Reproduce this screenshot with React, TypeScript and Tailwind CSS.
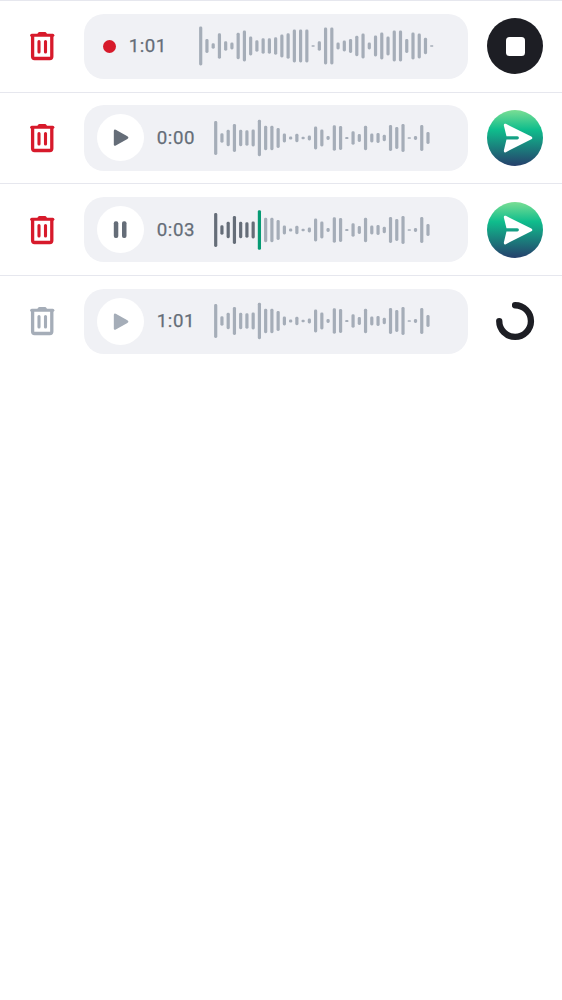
import type { ReactNode } from "react";

const RECORDING = [
  39, 14, 5.5, 25.5, 9.5, 7, 26.5, 31, 19, 11.5, 15.5, 15.5, 17.5, 23, 25.5, 33, 33, 33, 1.4, 9.5,
  37, 37, 7, 11, 14, 20.5, 25, 7, 21, 27, 19, 31, 31, 14, 27, 25, 16.5, 1.4,
];
const CLIP = [
  34, 9.5, 16.5, 28, 16.5, 15.5, 17, 36.5, 24.5, 24.5, 20, 9, 2.9, 8.5, 2.7, 5, 23, 17, 4, 25.5,
  24, 2.2, 13.5, 8, 24.5, 9, 10, 6.5, 26, 22, 28, 1.6, 4, 26, 12,
];
const PITCH = 6.244;

function Waveform({ levels, cursor = -1 }: { levels: number[]; cursor?: number }) {
  return (
    <svg width="240" height="40" viewBox="0 0 240 40" className="shrink-0">
      {levels.map((level, i) => {
        const h = i === cursor ? 39.7 : level;
        const fill = i === cursor ? "#079b74" : i < cursor ? "#656d78" : "#a5adb8";
        return (
          <rect key={i} x={i * PITCH + 0.1} y={20 - h / 2} width="3.2" height={h} rx={Math.min(1.4, h / 2.4)} fill={fill} />
        );
      })}
    </svg>
  );
}

function TrashIcon() {
  return (
    <svg width="26" height="30" viewBox="0 0 26 30" fill="none" stroke="currentColor" className="shrink-0">
      <path d="M2.6 4.6v20.9a2 2 0 0 0 2 2h15.2a2 2 0 0 0 2-2V4.6" strokeWidth="3.3" />
      <path d="M1.7 4.2h21.1" strokeWidth="3.1" strokeLinecap="round" />
      <path d="M6.8 4 8.1 1.7q.4-.6 1.2-.6h5.8q.8 0 1.2.6L17.6 4Z" fill="currentColor" stroke="none" />
      <path d="M9 10.6V21M15.5 10.6V21" strokeWidth="3.1" strokeLinecap="round" />
    </svg>
  );
}

function PlayIcon() {
  return (
    <svg width="47" height="47" viewBox="0 0 47 47" fill="currentColor">
      <path d="M16.8 17v13.3q0 2.2 2 1.2l11.6-6.6q2-1.3 0-2.6L18.8 15.8q-2-1-2 1.2Z" />
    </svg>
  );
}

function PauseIcon() {
  return (
    <svg width="47" height="47" viewBox="0 0 47 47" fill="currentColor">
      <rect x="16.8" y="15.3" width="4.5" height="16.6" rx="1.9" />
      <rect x="25" y="15.3" width="4.5" height="16.6" rx="1.9" />
    </svg>
  );
}

function StopButton() {
  return (
    <button className="flex size-[56.2px] items-center justify-center rounded-full bg-[#1d1e24]">
      <span className="size-[19px] rounded-[3.5px] bg-white" />
    </button>
  );
}

function SendButton() {
  return (
    <button className="size-[56.2px] rounded-full bg-[linear-gradient(180deg,#7ade94_0%,#0fbd8c_35%,#26406c_100%)]">
      <svg width="56.2" height="56.2" viewBox="0 0 56 56">
        <path
          d="M16.8 15.4 19.4 26.1H30.2a1.6 1.6 0 0 1 0 3.2H19.4L16.8 40.4q-.2 2.5 2 1.6L44.2 29.2Q46.2 27.8 44.2 26.4L18.8 13.8q-2.2-.8-2 1.6Z"
          fill="#fff"
        />
      </svg>
    </button>
  );
}

function Spinner() {
  return (
    <svg width="56.2" height="56.2" viewBox="0 0 56 56" fill="none">
      <path d="M28 12.2A15.8 15.8 0 1 1 12.2 28" stroke="#1d1e24" strokeWidth="6.3" strokeLinecap="round" />
    </svg>
  );
}

function Row({ disabled = false, action, children }: { disabled?: boolean; action: ReactNode; children: ReactNode }) {
  return (
    <div className="flex h-[91.67px] items-center border-t border-[#e6e7ee] pl-[29.5px]">
      <button className={disabled ? "text-[#a5adb8]" : "text-[#d71a2b]"} disabled={disabled}>
        <TrashIcon />
      </button>
      <div className="ml-[28.8px] mr-[18.7px] flex h-[65.6px] w-[384px] shrink-0 items-center rounded-[20px] bg-[#f0f1f5]">
        {children}
      </div>
      <div className="flex shrink-0">{action}</div>
    </div>
  );
}

function Time({ children }: { children: string }) {
  return (
    <span className="w-[57.5px] shrink-0 pl-[0.5px] text-[18.7px] font-normal tracking-[0.55px] text-[#656d78] [-webkit-text-stroke:0.25px_#656d78]">
      {children}
    </span>
  );
}

function Player({ icon, time, muted = false, cursor }: { icon: ReactNode; time: string; muted?: boolean; cursor?: number }) {
  return (
    <>
      <button
        className={`ml-[12.5px] mr-[12.5px] size-[47px] shrink-0 rounded-full bg-white ${muted ? "text-[#a5adb8]" : "text-[#656d78]"}`}
        disabled={muted}
      >
        {icon}
      </button>
      <Time>{time}</Time>
      <Waveform levels={CLIP} cursor={cursor} />
    </>
  );
}

export default function App() {
  return (
    <div className="min-h-screen w-full overflow-hidden bg-white font-['Roboto',sans-serif]">
      <Row action={<StopButton />}>
        <span className="ml-[18.8px] mr-[12.5px] size-[12.6px] shrink-0 rounded-full bg-[#d71a2b]" />
        <span className="flex w-[71px] shrink-0">
          <Time>1:01</Time>
        </span>
        <Waveform levels={RECORDING} />
      </Row>
      <Row action={<SendButton />}>
        <Player icon={<PlayIcon />} time="0:00" />
      </Row>
      <Row action={<SendButton />}>
        <Player icon={<PauseIcon />} time="0:03" cursor={7} />
      </Row>
      <Row disabled action={<Spinner />}>
        <Player icon={<PlayIcon />} time="1:01" muted />
      </Row>
    </div>
  );
}
